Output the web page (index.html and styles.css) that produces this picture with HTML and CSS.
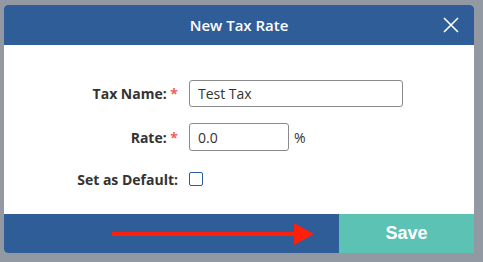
FILE: index.html
```html
<!DOCTYPE html>
<html lang="en">
<head>
    <meta charset="UTF-8">
    <meta name="viewport" content="width=device-width, initial-scale=1.0">
    <title>New Tax Rate</title>
    <link rel="stylesheet" href="styles.css">
</head>
<body>
    <div class="modal">
        <div class="modal-header">
            <h1>New Tax Rate</h1>
            <button class="close-btn" aria-label="Close">
                <svg width="16" height="16" viewBox="0 0 16 16">
                    <path d="M1 1 L15 15 M15 1 L1 15" stroke="#fff" stroke-width="1.6" fill="none"/>
                </svg>
            </button>
        </div>

        <form class="modal-body">
            <div class="row row-name">
                <label class="label">Tax Name: <span class="req">*</span></label>
                <input class="input input-name" type="text" value="Test Tax">
            </div>
            <div class="row row-rate">
                <label class="label">Rate: <span class="req">*</span></label>
                <input class="input input-rate" type="text" value="0.0">
                <span class="unit">%</span>
            </div>
            <div class="row row-default">
                <label class="label">Set as Default:</label>
                <span class="checkbox"></span>
            </div>
        </form>

        <div class="modal-footer">
            <div class="hint">
                <svg width="202" height="22" viewBox="0 0 202 22">
                    <rect x="0" y="9" width="184" height="4" fill="#ff200c"/>
                    <polygon points="182,0 202,11 182,22" fill="#ff200c"/>
                </svg>
            </div>
            <button class="save-btn" type="button">Save</button>
        </div>
    </div>
</body>
</html>
```

FILE: styles.css
```css
* {
    margin: 0;
    padding: 0;
    box-sizing: border-box;
}

body {
    background-color: #9399a3;
    font-family: 'Open Sans', sans-serif;
    height: 262px;
    overflow: hidden;
}

.modal {
    width: 470px;
    margin: 5px 0 0 4px;
    background-color: #fff;
    border-radius: 4px 4px 0 4px;
    overflow: hidden;
}

.modal-header {
    height: 40px;
    background-color: #2f5d98;
    display: flex;
    align-items: center;
    justify-content: center;
    position: relative;
}

.modal-header h1 {
    color: #fff;
    font-size: 15px;
    font-weight: 600;
}

.close-btn {
    position: absolute;
    right: 15px;
    top: 12px;
    width: 16px;
    height: 16px;
    background: none;
    border: none;
    display: flex;
}

.modal-body {
    padding: 35px 0 28px;
    display: flex;
    flex-direction: column;
}

.row {
    display: flex;
    align-items: center;
}

.row-rate {
    margin-top: 16px;
}

.row-default {
    margin-top: 21px;
    height: 14px;
}

.label {
    width: 174px;
    text-align: right;
    font-size: 14px;
    font-weight: 700;
    color: #333;
    margin-right: 11px;
}

.req {
    color: #e8625c;
}

.input {
    height: 27px;
    border: 1px solid #8a8a8a;
    border-radius: 3px;
    padding: 0 8px;
    font-family: 'Open Sans', sans-serif;
    font-size: 14px;
    color: #333;
}

.input-name {
    width: 214px;
}

.input-rate {
    width: 100px;
    height: 28px;
}

.unit {
    font-size: 14px;
    color: #333;
    margin-left: 5px;
}

.checkbox {
    width: 14px;
    height: 14px;
    border: 1.5px solid #2f5d98;
    border-radius: 2px;
}

.modal-footer {
    height: 39px;
    display: flex;
    background-color: #2f5d98;
}

.hint {
    flex: 1;
    display: flex;
    align-items: center;
    padding-left: 108px;
}

.save-btn {
    width: 135px;
    background-color: #5cc2b3;
    border: none;
    color: #fff;
    font-family: 'Liberation Sans', Arial, sans-serif;
    font-size: 18px;
    font-weight: 700;
}
```
